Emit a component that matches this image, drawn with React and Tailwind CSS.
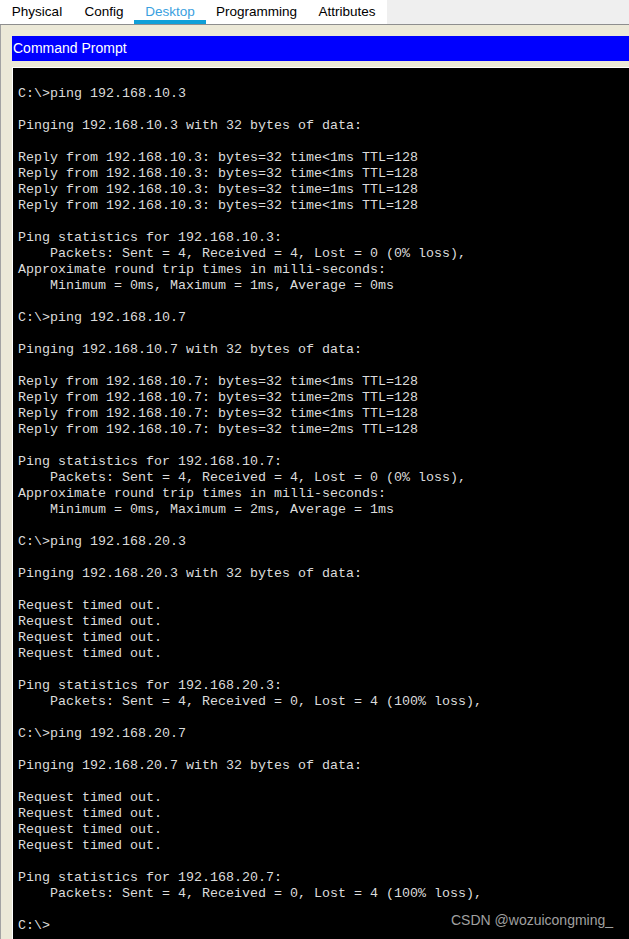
import React from 'react';

const tabs = [
    { label: 'Physical', w: 'w-[74px]' },
    { label: 'Config', w: 'w-[60px]' },
    { label: 'Desktop', w: 'w-[72px]', active: true },
    { label: 'Programming', w: 'w-[101px]' },
    { label: 'Attributes', w: 'w-[80px]' },
];

const pingOk = (ip, times, stats) => [
    `C:\\>ping ${ip}`,
    '',
    `Pinging ${ip} with 32 bytes of data:`,
    '',
    ...times.map((t) => `Reply from ${ip}: bytes=32 time${t} TTL=128`),
    '',
    `Ping statistics for ${ip}:`,
    '    Packets: Sent = 4, Received = 4, Lost = 0 (0% loss),',
    'Approximate round trip times in milli-seconds:',
    stats,
    '',
];

const pingFail = (ip) => [
    `C:\\>ping ${ip}`,
    '',
    `Pinging ${ip} with 32 bytes of data:`,
    '',
    'Request timed out.',
    'Request timed out.',
    'Request timed out.',
    'Request timed out.',
    '',
    `Ping statistics for ${ip}:`,
    '    Packets: Sent = 4, Received = 0, Lost = 4 (100% loss),',
    '',
];

const lines = [
    '',
    ...pingOk('192.168.10.3', ['<1ms', '<1ms', '=1ms', '<1ms'], '    Minimum = 0ms, Maximum = 1ms, Average = 0ms'),
    ...pingOk('192.168.10.7', ['<1ms', '=2ms', '<1ms', '=2ms'], '    Minimum = 0ms, Maximum = 2ms, Average = 1ms'),
    ...pingFail('192.168.20.3'),
    ...pingFail('192.168.20.7'),
    'C:\\>',
];

const App = () => {
    return (
        <div className="relative w-[629px] h-[939px] overflow-hidden bg-[#ece9d8] font-['Liberation_Sans',Arial,sans-serif]">
            {/* tab strip */}
            <div className="flex h-[25px] bg-[#efefef] border-b border-[#8e8e8e]">
                <div className="flex bg-white">
                    {tabs.map((t) => (
                        <div
                            key={t.label}
                            className={`${t.w} relative flex items-start justify-center pt-[3px] text-[13.5px] leading-[18px] ${t.active ? 'text-[#3a9fe0]' : 'text-black'}`}
                        >
                            {t.label}
                            {t.active && <div className="absolute left-0 right-0 bottom-0 h-[4px] bg-[#0e9fd8]"></div>}
                        </div>
                    ))}
                </div>
            </div>

            <div className="flex flex-col h-[914px] border-l border-[#a3a3a3] pl-[11px] pt-[11px]">
                <div className="h-[25px] bg-[#0000ff] text-white text-[14px] leading-[25px] pl-[1px]">
                    Command Prompt
                </div>
                <div className="mt-[6px] flex-1 border-t border-l border-white bg-black pl-[5px] pt-[2px] font-['Liberation_Mono','Courier_New',monospace] text-[13.33px] leading-[16px] text-[#dcdcdc]">
                    {lines.map((l, i) => (
                        <div key={i} className="w-fit h-[16px] whitespace-pre">{l}</div>
                    ))}
                </div>
            </div>

            {/* watermark */}
            <div className="absolute left-[451px] top-[911px] text-[14px] leading-[18px] text-[#a0a0a0]">
                CSDN @wozuicongming_
            </div>
        </div>
    );
};

export default App;
